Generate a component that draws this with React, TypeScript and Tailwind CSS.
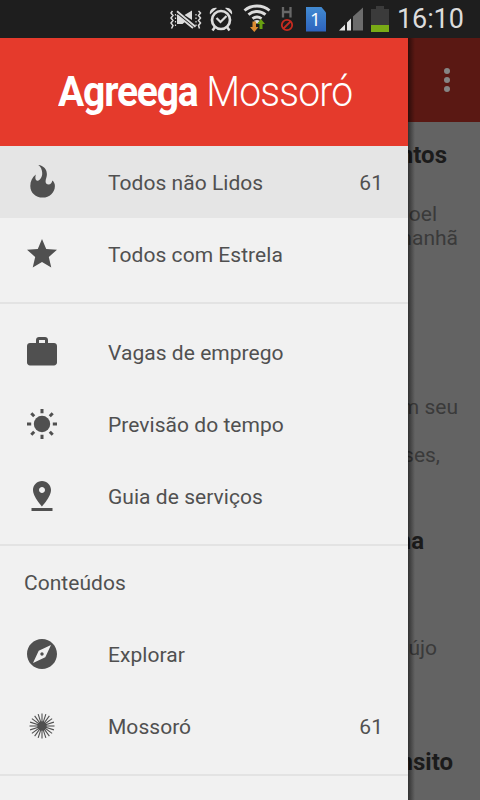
import React from "react";

type IconProps = {
	className?: string;
};

const FlameIcon = ({ className }: IconProps) => (
	<svg viewBox="0 0 36 36" className={className} fill="currentColor">
		<path d="M14.300 1C19.500 1.500 23.200 5.500 22.900 10.800C22.700 13.500 21.500 15.500 21.600 17.800C21.700 19.500 22.900 20.600 24.500 20.600C26.800 20.500 28 18.800 28.300 16.500C30 17.800 30.900 19.800 30.900 21.900C30.900 28.500 25.500 33.600 18.700 33.600C11.700 33.600 6.300 28.600 6.300 21.900C6.300 17 8.300 13.500 11.800 10.500C11.200 13 11.200 14.800 12 16C12.900 17.400 14.700 17 16.300 15C17.800 13 18.300 11 18.200 8.700C18 5.500 16.800 2.700 14.300 1z" />
	</svg>
);

const StarIcon = ({ className }: IconProps) => (
	<svg viewBox="0 0 24 24" className={className} fill="currentColor">
		<path d="M12 17.270 18.180 21l-1.640-7.030L22 9.240l-7.190-.61L12 2 9.190 8.630 2 9.240l5.460 4.730L5.820 21z" />
	</svg>
);

const WorkIcon = ({ className }: IconProps) => (
	<svg viewBox="0 0 24 24" className={className} fill="currentColor">
		<path d="M20 6h-4V4c0-1.110-.89-2-2-2h-4c-1.110 0-2 .89-2 2v2H4c-1.110 0-1.990.89-1.990 2L2 19c0 1.110.89 2 2 2h16c1.110 0 2-.89 2-2V8c0-1.110-.89-2-2-2zm-6 0h-4V4h4v2z" />
	</svg>
);

const SunIcon = ({ className }: IconProps) => (
	<svg viewBox="0 0 36 36" className={className} fill="none" stroke="currentColor" strokeWidth="3">
		<circle cx="18" cy="18" r="8.200" fill="currentColor" stroke="none" />
		<path d="M18 3v4.200M18 28.800V33M3 18h4.200M28.800 18H33M7.300 7.300l2.900 2.900M25.800 25.800l2.900 2.900M7.300 28.700l2.900-2.900M25.800 10.200l2.900-2.900" />
	</svg>
);

const PinIcon = ({ className }: IconProps) => (
	<svg viewBox="0 0 24 24" className={className} fill="currentColor">
		<path d="M18 8c0-3.310-2.690-6-6-6S6 4.690 6 8c0 4.500 6 11 6 11s6-6.500 6-11zm-8 0c0-1.100.9-2 2-2s2 .9 2 2-.89 2-2 2c-1.100 0-2-.9-2-2zM5 20v2h14v-2H5z" />
	</svg>
);

const ExploreIcon = ({ className }: IconProps) => (
	<svg viewBox="0 0 24 24" className={className} fill="currentColor">
		<path d="M12 10.900c-.61 0-1.100.49-1.100 1.100s.49 1.100 1.100 1.100c.61 0 1.100-.49 1.100-1.100s-.49-1.100-1.100-1.100zM12 2C6.480 2 2 6.480 2 12s4.480 10 10 10 10-4.480 10-10S17.520 2 12 2zm2.190 12.190L6 18l3.810-8.190L18 6l-3.810 8.190z" />
	</svg>
);

const rays = Array.from({ length: 20 }, (_, i) => i * 18);

const BurstIcon = ({ className }: IconProps) => (
	<svg viewBox="0 0 36 36" className={className} stroke="currentColor" strokeWidth="1.100">
		<circle cx="18" cy="18" r="4.700" fill="currentColor" stroke="none" />
		{rays.map((angle) => (
			<path key={angle} d="M18 5.500V15" transform={`rotate(${angle} 18 18)`} />
		))}
	</svg>
);

const StatusBar = () => (
	<div className="flex h-[38px] items-center bg-[#1e1e1e] pl-[169px] text-[#dcdcdc]">
		<svg viewBox="0 0 34 26" className="h-[26px] w-[34px] shrink-0" fill="none" stroke="currentColor">
			<path d="M3.500 5L2 7l2 2.500L2 12l2 2.500L2 17l2 2.500-1.500 3M29.500 5l2 2-2 2.500 2 2.500-2 2.500 2 2.500-2 2.500 1 3" strokeWidth="1.500" />
			<path d="M6.500 8v12M27 8v12" strokeWidth="1.200" strokeDasharray="1.500 2" />
			<path d="M8 9v9h5.500l3-2.500zM15.500 9L23 4.500v9.500zM17 17l6 5v-2z" fill="currentColor" stroke="none" />
			<path d="M7.500 7.200l17 14" stroke="#1e1e1e" strokeWidth="1.200" />
			<path d="M8 5.200l18.500 15.500" strokeWidth="1.800" />
			<path d="M8 9l16 13" strokeWidth="1.800" />
		</svg>
		<svg viewBox="0 0 26 28" className="ml-[5px] h-7 w-[26px] shrink-0" fill="none" stroke="currentColor">
			<circle cx="13" cy="15" r="9" strokeWidth="2.700" />
			<path d="M8.500 13l4 4 6-6" strokeWidth="2.200" />
			<path d="M2 9.500c-1-4 2.500-7.500 7-6.500zM24 9.500c1-4-2.500-7.500-7-6.500z" fill="currentColor" stroke="none" />
			<path d="M7 22l-2.500 3.500M19 22l2.500 3.500" strokeWidth="2.500" />
		</svg>
		<svg viewBox="0 0 28 30" className="ml-[9px] h-[30px] w-7 shrink-0" fill="none" stroke="currentColor" strokeWidth="2.900">
			<path d="M1.500 6.500c7-6 18-6 25 0M5.500 10.700c5-4.300 12-4.300 17 0M9.500 14.700c3-2.400 6-2.400 9 0" />
			<path d="M11 17q3-2 6 0L14 20z" fill="currentColor" stroke="none" />
			<path d="M9.500 17.500h3.500V23h2.500l-4.200 5L7 23h2.500z" fill="#dc8c32" stroke="none" />
			<path d="M16.500 25v-5H14l4-5 4 5h-2.500v5z" fill="#68a010" stroke="none" />
		</svg>
		<svg viewBox="0 0 14 26" className="ml-[9px] h-[26px] w-[14px] shrink-0" fill="none">
			<path d="M3 1v10.500M10.500 1v10.500M3 6h7.500" stroke="#686868" strokeWidth="2.300" />
			<circle cx="7" cy="19" r="5.200" stroke="#c62b20" strokeWidth="1.800" />
			<path d="M3.500 22.500l7-7" stroke="#c62b20" strokeWidth="1.800" />
		</svg>
		<div className="ml-3 flex h-[25px] w-5 shrink-0 items-center justify-center bg-linear-to-b from-[#438bd2] to-[#2d62bd] pr-px font-['Open_Sans',sans-serif] text-[19px] leading-none text-white [clip-path:polygon(0_0,75%_0,100%_24%,100%_100%,0_100%)]">
			1
		</div>
		<svg viewBox="0 0 25 24" className="ml-[12px] h-6 w-[25px] shrink-0">
			<path d="M1 23.500l6-6v6zM9 15.500l4-4v12H9z" fill="#e4e4e4" />
			<path d="M15 9.500l10-9v23H15z" fill="#6c6c6c" />
		</svg>
		<svg viewBox="0 0 18 26" className="ml-[8px] h-[26px] w-[18px] shrink-0">
			<path d="M5 0h8v3h5v16H0V3h5z" fill="#3b3b3b" />
			<path d="M0 19h18v7H0z" fill="#7aab16" />
		</svg>
		<span className="ml-[8px] text-[27px] leading-[38px] tracking-[-0.1px]">16:10</span>
	</div>
);

type Item = {
	title: string;
	icon: React.ReactNode;
	count?: number;
	active?: boolean;
};

const filters: Item[] = [
	{ title: "Todos não Lidos", icon: <FlameIcon className="size-9" />, count: 61, active: true },
	{ title: "Todos com Estrela", icon: <StarIcon className="size-9" /> },
];

const services: Item[] = [
	{ title: "Vagas de emprego", icon: <WorkIcon className="size-9" /> },
	{ title: "Previsão do tempo", icon: <SunIcon className="size-9" /> },
	{ title: "Guia de serviços", icon: <PinIcon className="size-9" /> },
];

const contents: Item[] = [
	{ title: "Explorar", icon: <ExploreIcon className="size-9" /> },
	{ title: "Mossoró", icon: <BurstIcon className="size-9" />, count: 61 },
];

const MenuItem = ({ item }: { item: Item }) => (
	<li className={`flex h-[72px] items-center pr-[25px] pl-6 ${item.active ? "bg-[#e5e5e5]" : ""}`}>
		{item.icon}
		<span className="ml-12 flex-1 pt-0.5">{item.title}</span>
		{item.count && <span className="pt-0.5">{item.count}</span>}
	</li>
);

const Divider = () => <div className="mt-3 h-0.5 shrink-0 bg-[#e3e3e3]" />;

const Drawer = () => (
	<nav className="flex w-[408px] shrink-0 flex-col overflow-hidden bg-[#f1f1f1] text-[21px] leading-6 tracking-[0.04px] text-[#505050]">
		<div className="flex h-[108px] shrink-0 items-center justify-center bg-[#e53a2c] pl-[3px] text-[42px] leading-none whitespace-pre text-white">
			<div className="flex scale-x-[0.93]">
				<span className="font-bold tracking-[-1.3px]">Agreega</span>
				<span className="font-light tracking-[-0.9px]"> Mossoró</span>
			</div>
		</div>
		<ul>
			{filters.map((item) => (
				<MenuItem key={item.title} item={item} />
			))}
		</ul>
		<Divider />
		<ul className="mt-3">
			{services.map((item) => (
				<MenuItem key={item.title} item={item} />
			))}
		</ul>
		<Divider />
		<h2 className="flex h-[72px] shrink-0 items-center pt-0.5 pl-6">Conteúdos</h2>
		<ul>
			{contents.map((item) => (
				<MenuItem key={item.title} item={item} />
			))}
		</ul>
		<Divider />
	</nav>
);

// The article list stays visible, dimmed, beside the open drawer
const DimmedPage = () => (
	<main className="relative flex min-w-0 flex-1 flex-col overflow-hidden bg-[#636363]">
		<div className="flex h-[84px] shrink-0 items-center justify-center bg-[#5a1813] pl-[6px]">
			<svg viewBox="0 0 6 24" className="h-6 w-1.5" fill="#858585">
				<circle cx="3" cy="3" r="3" />
				<circle cx="3" cy="12" r="3" />
				<circle cx="3" cy="21" r="3" />
			</svg>
		</div>
		<div className="flex flex-col items-end text-[21px] leading-6 whitespace-nowrap text-[#3a3a3a]">
			<h3 className="mt-[21px] mr-[33px] text-2xl leading-6 font-bold text-[#1b1b1b]">ntos</h3>
			<p className="mt-[35px] mr-[43px]">oel</p>
			<p className="mr-[22px]">manhã</p>
			<p className="mt-[145px] mr-[22px]">m seu</p>
			<p className="mt-6 mr-10">ses,</p>
			<h3 className="mt-[62px] mr-[56px] text-2xl leading-6 font-bold text-[#1b1b1b]">na</h3>
			<p className="mt-[83px] mr-[43px]">újo</p>
			<h3 className="mt-[90px] mr-[27px] text-2xl leading-6 font-bold text-[#1b1b1b]">nsito</h3>
		</div>
		<div className="absolute inset-y-0 left-0 w-[7px] bg-linear-to-r from-black/50 to-transparent" />
	</main>
);

const App = () => {
	return (
		<div className="flex h-[800px] w-[480px] flex-col overflow-hidden font-[Roboto,sans-serif]">
			<StatusBar />
			<div className="flex min-h-0 flex-1">
				<Drawer />
				<DimmedPage />
			</div>
		</div>
	);
};

export default App;
